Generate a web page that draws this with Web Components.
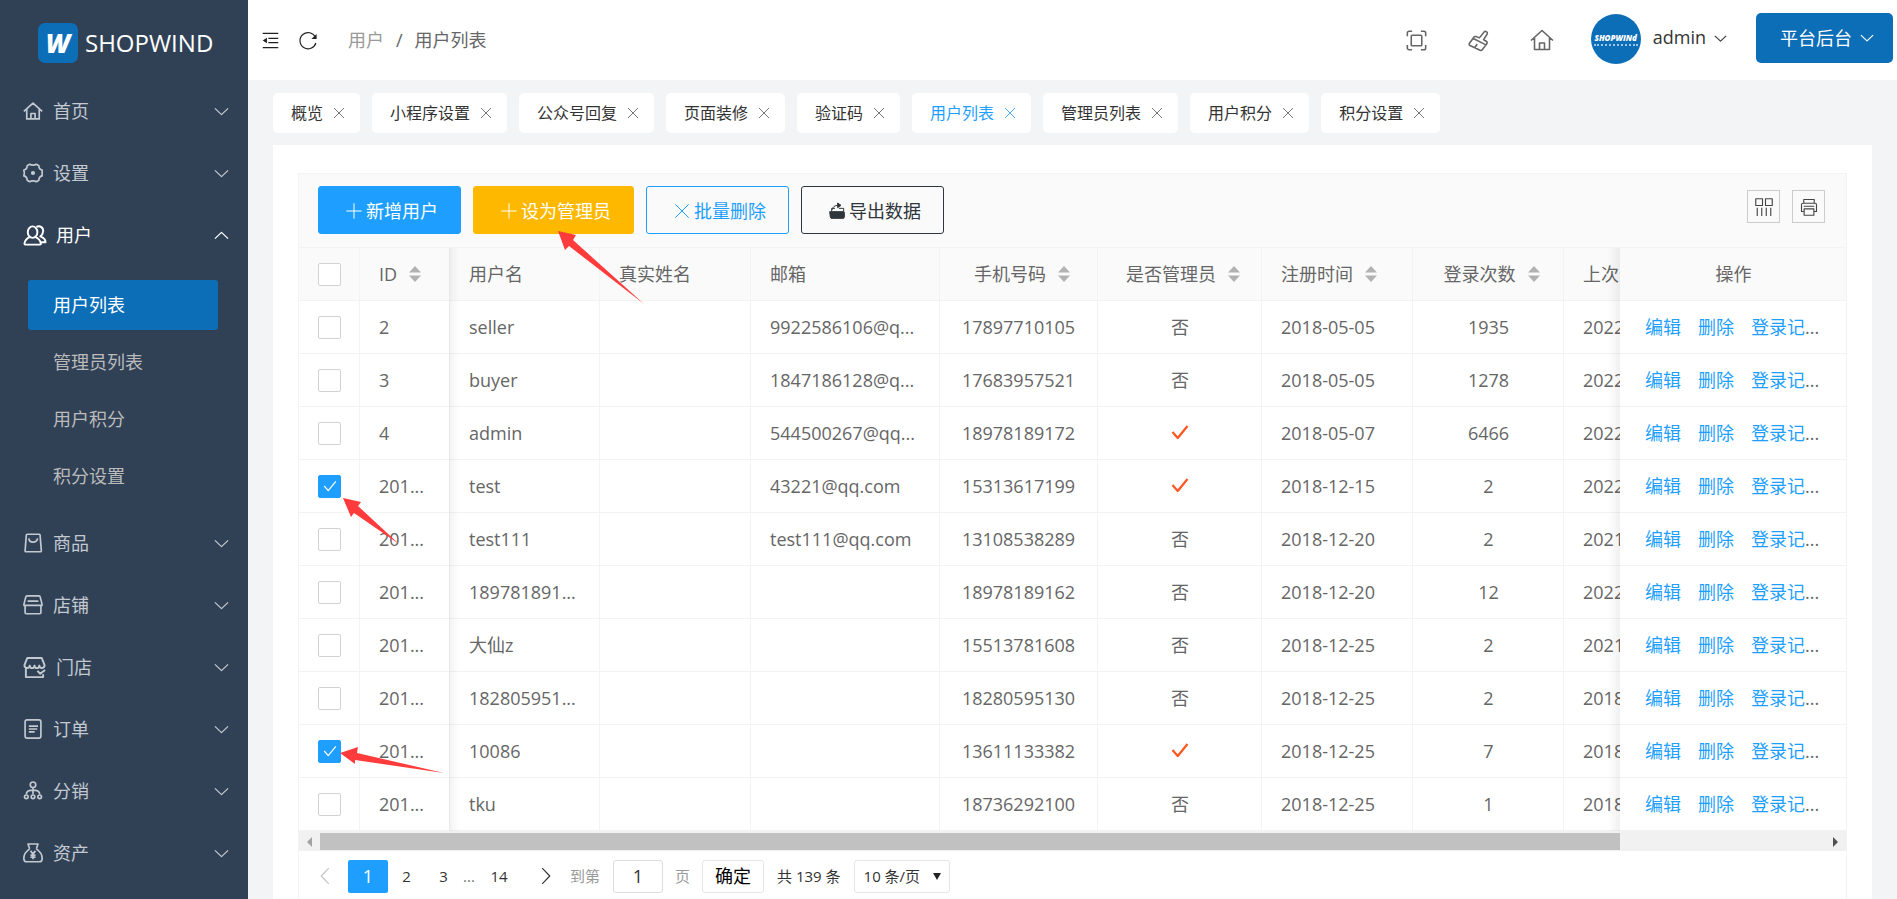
<!DOCTYPE html>
<html lang="zh-CN">
<head>
<meta charset="utf-8">
<title>用户列表</title>
<style>
  html, body { margin: 0; height: 100%; }
  body {
    overflow: hidden;
    background: #f3f4f6;
    color: #333;
    font: 18px/24px "Open Sans", "Noto Sans CJK SC", sans-serif;
  }
</style>
</head>
<body>
<shop-app></shop-app>

<script>
const ICONS = {
  home: '<path d="M1 12.500 12 2.500l11 10M4.500 10v11.500h15V10M9.500 21.500V15h5v6.500"/>',
  gear: '<path d="M8 1.500c2 1.500 6 1.500 8 0l3 1.800c0 3 1.500 4.700 4 5.200v3.500c-.3 1 0 2.500 0 3.500-2.500.5-4 2.200-4 5.200l-3 1.800c-2-1.500-6-1.500-8 0l-3-1.800c0-3-1.500-4.700-4-5.200.8-2.300.8-4.700 0-7 2.500-.5 4-2.200 4-5.200z"/><circle cx="12" cy="12" r="1.500" fill="currentColor"/>',
  users: '<ellipse cx="10" cy="8.500" rx="5" ry="6"/><path d="M7.500 13.500C4 15 2 17 1.500 20.500c0 1 .5 1 1.500 1h14.500c1 0 1.500-.5 1-1.500-.5-3-2.500-5-6-6.500M14 3c4-2 7.500 1 7 5-.3 2.500-1.500 4-3 5 4 1.500 5.500 3.500 5.500 6h-5"/>',
  bag: '<path d="M5 1.500h14.500c.6 0 1 .4 1 1L22 21.500c0 .6-.4 1-1 1H3.500c-.6 0-1-.4-1-1L4 2.500c0-.6.4-1 1-1zM7 6.500c.5 6 9.500 6 10.500 0"/>',
  shop: '<path d="M5 1h14c1 0 1.500.5 1.700 1.500L22.800 11v1.500H1.200V11L3.300 2.500C3.500 1.500 4 1 5 1zM2.500 13v8c0 1 .5 1.500 1.500 1.500h16c1 0 1.500-.5 1.500-1.500v-8M5.500 7.300h13"/>',
  store: '<path d="M4.500 2h15l3 7.500c0 4-5 4-5.500.5-.5 3.500-4.500 3.500-5 0-.5 3.500-4.500 3.500-5 0-.5 3.500-5.500 3.500-5.500-.5zM3 13v9h18v-3M15 15.500l3 3 5-4"/>',
  order: '<rect x="2.500" y="1" width="19" height="22" rx="2.500"/><path d="M7 8.500h11M7 12h10M7 15.500h7"/>',
  tree: '<circle cx="12" cy="4.500" r="3.300"/><path d="M12 8v8M4 16c0-3 3-5 8-5s8 2 8 5"/><circle cx="4" cy="19" r="2.200"/><circle cx="12" cy="19" r="2.200"/><circle cx="20" cy="19" r="2.200"/>',
  money: '<path d="M8 7 6 1.200h12L16 7M8 7C3.500 10 1 14 1 18.500c0 2.500 1 4 3.500 4h15c2.500 0 3.500-1.500 3.500-4C23 14 20.500 10 16 7M9 9.500l3 3.500 3-3.500M12 13v6.500M9 14.500h6M9 17h6"/>',
  down: '<path d="M1.500 7 12 17 22.500 7"/>',
  up: '<path d="M1.500 17 12 7l10.500 10"/>',
  left: '<path d="M17 1.500 7 12l10 10.500"/>',
  right: '<path d="M7 1.500 17 12 7 22.500"/>',
  fold: '<path d="M1 2h22M9 9h14M9 15h14M1 22h22"/><path d="M1 12l6-4v8z" fill="currentColor" stroke="none"/>',
  refresh: '<path d="M22 8.500A10.800 10.800 0 1 0 22.500 16"/><path d="M23.500 4v6.500h-7z" fill="currentColor" stroke="none"/>',
  full: '<rect x="6" y="6" width="12" height="12" rx="1"/><path d="M1.500 7V3.500c0-1 1-2 2-2H7M17 1.500h3.500c1 0 2 1 2 2V7M22.500 17v3.500c0 1-1 2-2 2H17M7 22.500H3.500c-1 0-2-1-2-2V17"/>',
  brush: '<path d="M5.500 9.500 20.500 17M6.500 8.500 1.500 15.500c-.5 1 0 2 .8 2.300l11.500 5.400c1 .5 2 .2 2.500-.7l5-6.500c.8-1.200.5-2.500-.5-3.200l-3-1.700L22 4.500c1-2.500-2.500-4-3.800-2L13 9 9 7.500c-1-.3-2 0-2.500 1zM8 20l2.500-4"/>',
  plus: '<path d="M12 .5v23M.5 12h23"/>',
  close: '<path d="M2 2l20 20M22 2 2 22"/>',
  tick: '<path d="M2 12l7 8L22 4"/>',
  exportout: '<path d="M1 13h20l2 1v7l-1 2H3l-1-2z" fill="currentColor"/><path d="M4 12V8h5M15 8h7v11M5 10c1-5 4-6.500 9-6.500"/><path d="M13 0l5 3.500-5 3.500z" fill="currentColor"/>',
  columns: '<path d="M1 1h9v9H1zM14 1h9v9h-9zM3 13v11M9 13v11M15 13v11M21 13v11"/>',
  printer: '<path d="M5 7V2h14v5M5 18H2V9c0-1.200.8-2 2-2h16c1.200 0 2 .8 2 2v9h-3M5.500 14.500h13V23h-13zM5 11h14"/>'
};

/* Registers an element whose shadow root is cloned from the given markup. */
function define(name, html, setup) {
  customElements.define(name, class extends HTMLElement {
    connectedCallback() {
      if (this.shadowRoot) return;
      const root = this.attachShadow({ mode: 'open' });
      const tpl = document.createElement('template');
      tpl.innerHTML = typeof html === 'function' ? html(this) : html;
      root.append(tpl.content.cloneNode(true));
      if (setup) setup(root, this);
    }
  });
}

define('ui-icon', el => `
  <style>
    :host { display: inline-block; flex: none; width: var(--size, 20px); height: var(--size, 20px); }
    svg { display: block; width: 100%; height: 100%; overflow: visible; fill: none;
      stroke: currentColor; stroke-width: var(--stroke, 2); stroke-linejoin: round; }
  </style>
  <svg viewBox="0 0 24 24" aria-hidden="true">${ICONS[el.getAttribute('name')]}</svg>`);

define('side-item', el => `
  <style>
    :host { display: block; color: #c3c9d1; }
    :host([open]) { color: #fff; }
    a { display: flex; align-items: center; gap: 10px; height: 62px; padding: 0 19px 0 23px; color: inherit; text-decoration: none; }
    .label { flex: 1; }
    .arrow { --size: 15px; }
    :host([wide]) .main { --size: 23px; }
  </style>
  <a href="#"><ui-icon class="main" name="${el.getAttribute('icon')}"></ui-icon>
    <span class="label"><slot></slot></span>
    <ui-icon class="arrow" name="${el.hasAttribute('open') ? 'up' : 'down'}"></ui-icon></a>
  <slot name="sub"></slot>`);

define('side-sub', `
  <style>
    :host { display: block; }
    nav { display: flex; flex-direction: column; gap: 7px; padding: 14px 30px 11px 28px; }
    a { height: 50px; line-height: 50px; padding-left: 25px; border-radius: 3px; color: #bbb; text-decoration: none; }
    a.on { background: #0d6eb8; color: #fff; }
  </style>
  <nav><a class="on" href="#">用户列表</a><a href="#">管理员列表</a><a href="#">用户积分</a><a href="#">积分设置</a></nav>`);

define('shop-sidebar', `
  <style>
    :host { display: block; background: #304156; overflow: hidden; }
    .logo { display: flex; align-items: center; gap: 7px; height: 80px; padding: 6px 0 0 38px; box-sizing: border-box;
      color: #fff; font-size: 24px; line-height: 40px; text-decoration: none; }
    .mark { width: 40px; height: 40px; border-radius: 7px; background: #0d6eb8; text-align: center;
      font-size: 26px; font-weight: 800; font-style: italic; }
  </style>
  <a class="logo" href="#"><span class="mark">W</span><span>SHOPWIND</span></a>
  <side-item icon="home">首页</side-item>
  <side-item icon="gear">设置</side-item>
  <side-item icon="users" open wide>用户<side-sub slot="sub"></side-sub></side-item>
  <side-item icon="bag">商品</side-item>
  <side-item icon="shop">店铺</side-item>
  <side-item icon="store" wide>门店</side-item>
  <side-item icon="order">订单</side-item>
  <side-item icon="tree">分销</side-item>
  <side-item icon="money">资产</side-item>`);

define('shop-header', `
  <style>
    :host { display: flex; align-items: center; height: 80px; box-sizing: border-box; padding: 0 4px 0 14px; background: #fff; }
    a { color: inherit; text-decoration: none; display: flex; align-items: center; }
    .fold { --size: 17px; color: #222; --stroke: 1.6; }
    .refresh { --size: 18px; color: #222; margin-left: 20px; --stroke: 1.6; }
    .crumbs { display: flex; gap: 12px; margin-left: 31px; color: #666; }
    .crumbs a { color: #999; }
    .tools { display: flex; align-items: center; margin-left: auto; color: #666; gap: 41px; --size: 21px; --stroke: 1.8; }
    .tools .h { --size: 24px; --stroke: 1.6; }
    .user { margin-left: 37px; gap: 12px; }
    .avatar { display: flex; flex-direction: column; justify-content: center; align-items: center; width: 50px; height: 50px;
      border-radius: 50%; background: #0d6eb8; color: #fff; overflow: hidden; font-size: 8px; font-weight: 800;
      font-style: italic; line-height: 10px; margin-top: -2px; }
    .avatar::after { content: ""; width: 44px; border-top: 2px dotted #9cc5e3; margin-top: 1px; }
    .name { display: flex; align-items: center; gap: 8px; margin-top: -6px; --size: 13px; }
    .name ui-icon { margin-top: 2px; }
    .platform { display: flex; align-items: center; gap: 8px; height: 50px; margin: -4px 0 0 29px; padding: 0 19px 0 24px;
      border: 0; border-radius: 5px; background: #0d6eb8; color: #fff; font: inherit; --size: 14px; }
  </style>
  <a href="#" aria-label="收起"><ui-icon class="fold" name="fold"></ui-icon></a>
  <a href="#" aria-label="刷新"><ui-icon class="refresh" name="refresh"></ui-icon></a>
  <nav class="crumbs"><a href="#">用户</a><span>/</span><span>用户列表</span></nav>
  <div class="tools">
    <a href="#" aria-label="全屏"><ui-icon name="full"></ui-icon></a>
    <a href="#" aria-label="清理"><ui-icon name="brush"></ui-icon></a>
    <a href="#" aria-label="首页"><ui-icon class="h" name="home"></ui-icon></a>
  </div>
  <a class="user" href="#"><span class="avatar">SHOPWINd</span>
    <span class="name">admin <ui-icon name="down"></ui-icon></span></a>
  <button class="platform">平台后台<ui-icon name="down"></ui-icon></button>`);

define('tab-item', `
  <style>
    :host { display: flex; align-items: center; gap: 10px; height: 40px; padding: 0 15px 0 18px; border-radius: 5px;
      background: #fff; color: #333; font-size: 16px; box-sizing: border-box; }
    :host([active]) { color: #1e9fff; }
    a { color: inherit; text-decoration: none; white-space: nowrap; }
    button { display: flex; padding: 0; border: 0; background: none; color: #777; --size: 12px; }
    :host([active]) button { color: #4ea8f5; }
  </style>
  <a href="#"><slot></slot></a><button aria-label="关闭"><ui-icon name="close"></ui-icon></button>`);

define('action-button', el => `
  <style>
    :host { display: block; }
    button { display: flex; align-items: center; gap: 4px; height: 48px; box-sizing: border-box; padding: 2px 22px 0 27px;
      border: 1px solid var(--line); border-radius: 3px; background: var(--fill, transparent); color: var(--ink, #fff);
      font: inherit; white-space: nowrap; --size: 16px; --stroke: 1.5; }
  </style>
  <button><ui-icon name="${el.getAttribute('icon')}"></ui-icon><slot></slot></button>`);

const USERS = [
  ['2', 'seller', '9922586106@q...', '17897710105', 0, '2018-05-05', '1935', '2022'],
  ['3', 'buyer', '1847186128@q...', '17683957521', 0, '2018-05-05', '1278', '2022'],
  ['4', 'admin', '544500267@qq...', '18978189172', 1, '2018-05-07', '6466', '2022'],
  ['201...', 'test', '43221@qq.com', '15313617199', 1, '2018-12-15', '2', '2022', 1],
  ['201...', 'test111', 'test111@qq.com', '13108538289', 0, '2018-12-20', '2', '2021'],
  ['201...', '189781891...', '', '18978189162', 0, '2018-12-20', '12', '2022'],
  ['201...', '大仙z', '', '15513781608', 0, '2018-12-25', '2', '2021'],
  ['201...', '182805951...', '', '18280595130', 0, '2018-12-25', '2', '2018'],
  ['201...', '10086', '', '13611133382', 1, '2018-12-25', '7', '2018', 1],
  ['201...', 'tku', '', '18736292100', 0, '2018-12-25', '1', '2018']
];
const SORT = '<svg class="sort" viewBox="0 0 12 16" aria-hidden="true"><path d="M6 0l6 6.500H0zM6 16l6-6.500H0z"/></svg>';
const box = (on, label) => `<span class="box"><input type="checkbox" aria-label="${label}"${on ? ' checked' : ''}><ui-icon name="tick"></ui-icon></span>`;

define('user-table', `
  <style>
    :host { display: block; }
    .scroll { overflow: hidden; }
    table { width: 1803px; min-width: 100%; table-layout: fixed; border-collapse: separate; border-spacing: 0; color: #666; }
    th, td { height: 53px; box-sizing: border-box; padding: 0 18px 0 19px; border: 0 solid #f3f3f3; border-width: 0 1px 1px 0;
      background: #fff; font-weight: 400; text-align: left; white-space: nowrap; overflow: hidden; }
    th { background: #fafafa; }
    .c { text-align: center; }
    .tel { padding: 0 8px; }
    .fix { position: sticky; z-index: 1; }
    .f0 { left: 0; }
    .f1 { left: 61px; overflow: visible; }
    .f1::after { content: ""; position: absolute; left: 100%; top: 0; bottom: -1px; width: 10px;
      background: linear-gradient(90deg, rgba(0,0,0,.05), transparent); }
    .end { right: 0; border-right: 0; overflow: visible; }
    .end::before { content: ""; position: absolute; right: 100%; top: 0; bottom: -1px; width: 12px;
      background: linear-gradient(270deg, rgba(0,0,0,.06), transparent); }
    .ops { display: flex; gap: 17px; padding-left: 6px; }
    a { color: #1e9fff; text-decoration: none; }
    .sort { width: 12px; height: 16px; margin: 0 -6px -1px 12px; fill: #b2b2b2; }
    .f1 .sort { margin-right: 0; }
    .box { display: grid; width: 23px; height: 23px; }
    .box > * { grid-area: 1 / 1; }
    input { appearance: none; margin: 0; box-sizing: border-box; border: 1px solid #d2d2d2; border-radius: 2px; background: #fff; }
    input:checked { background: #1e9fff; border-color: #1e9fff; }
    .box ui-icon { visibility: hidden; place-self: center; color: #fff; --size: 14px; --stroke: 2; }
    input:checked + ui-icon { visibility: visible; }
    .yes { display: block; margin: 0 auto 2px; color: #ff5722; --size: 18px; --stroke: 3; }
    .bar { display: flex; align-items: center; justify-content: space-between; height: 20px; padding: 2px 8px 1px;
      box-sizing: border-box; background: #f1f1f1; }
    .track { flex: 1; height: 17px; margin: 0 8px; }
    .thumb { width: calc(100% - 205px); height: 17px; background: #c1c1c1; }
    .tri { border: 5px solid transparent; border-width: 5px 0; }
    .tri.l { border-right: 5px solid #a3a3a3; }
    .tri.r { border-left: 5px solid #505050; }
  </style>
  <div class="scroll"><table>
    <colgroup><col style="width:61px"><col style="width:90px"><col style="width:150px"><col style="width:151px">
      <col style="width:189px"><col style="width:158px"><col style="width:164px"><col style="width:151px">
      <col style="width:151px"><col><col style="width:226px"></colgroup>
    <thead><tr>
      <th class="fix f0">${box(0, '全选')}</th><th class="fix f1">ID${SORT}</th><th>用户名</th><th>真实姓名</th><th>邮箱</th>
      <th class="c">手机号码${SORT}</th><th class="c">是否管理员${SORT}</th><th>注册时间${SORT}</th><th class="c">登录次数${SORT}</th>
      <th>上次登录</th><th class="fix end c">操作</th>
    </tr></thead>
    <tbody>${USERS.map(u => `<tr>
      <td class="fix f0">${box(u[8], '选择 ' + u[1])}</td><td class="fix f1">${u[0]}</td><td>${u[1]}</td><td></td><td>${u[2]}</td>
      <td class="c tel">${u[3]}</td><td class="c">${u[4] ? '<ui-icon class="yes" name="tick"></ui-icon>' : '否'}</td>
      <td>${u[5]}</td><td class="c">${u[6]}</td><td>${u[7]}</td>
      <td class="fix end"><div class="ops"><a href="#">编辑</a><a href="#">删除</a><span><a href="#">登录记</a>...</span></div></td>
    </tr>`).join('')}</tbody>
  </table></div>
  <div class="bar"><i class="tri l"></i><div class="track"><div class="thumb"></div></div><i class="tri r"></i></div>`);

define('page-bar', `
  <style>
    :host { display: flex; align-items: center; height: 50px; padding-left: 17px; font-size: 15px; color: #333; }
    a { display: flex; justify-content: center; align-items: center; height: 33px; color: inherit; text-decoration: none; --size: 18px; --stroke: 1.5; }
    .prev { color: #c2c2c2; width: 18px; margin-right: 14px; }
    .on { width: 40px; border-radius: 2px; background: #1e9fff; color: #fff; font-size: 18px; }
    .n { width: 37px; }
    .dots { width: 14px; text-align: center; color: #777; }
    .last { width: 46px; }
    .next { width: 18px; margin: 0 15px; }
    label, .page { color: #999; }
    input { width: 50px; height: 33px; box-sizing: border-box; margin: 0 12px 0 13px; padding: 0; border: 1px solid #ddd; border-radius: 3px;
      color: #333; font: inherit; font-size: 18px; text-align: center; }
    button { width: 62px; height: 33px; margin: 0 13px 0 12px; padding: 0; border: 1px solid #e6e6e6; border-radius: 3px; background: #fff;
      color: #000; font: inherit; font-size: 18px; }
    .limit { display: grid; align-items: center; margin-left: 13px; }
    .limit > * { grid-area: 1 / 1; }
    select { appearance: none; width: 96px; height: 33px; padding: 0 0 0 9px; border: 1px solid #e6e6e6; border-radius: 3px;
      background: #fff; color: #333; font: inherit; }
    .limit i { justify-self: end; margin-right: 9px; border: 4px solid transparent; border-top: 7px solid #222; border-bottom: 0; pointer-events: none; }
  </style>
  <a class="prev" href="#" aria-label="上一页"><ui-icon name="left"></ui-icon></a>
  <a class="on" href="#">1</a><a class="n" href="#">2</a><a class="n" href="#">3</a><span class="dots">...</span>
  <a class="last" href="#">14</a><a class="next" href="#" aria-label="下一页"><ui-icon name="right"></ui-icon></a>
  <label for="p">到第</label><input id="p" type="text" value="1"><span class="page">页</span>
  <button>确定</button><span>共 139 条</span>
  <span class="limit"><select aria-label="每页条数"><option>10 条/页</option></select><i></i></span>`);

define('user-panel', `
  <style>
    :host { display: block; background: #fff; padding: 28px 25px 0; }
    .frame { position: relative; border: 1px solid #f3f3f3; border-bottom: 0; height: 100%; box-sizing: border-box; }
    .bar { display: flex; align-items: flex-start; gap: 12px; height: 74px; box-sizing: border-box; padding: 12px 21px 0 19px;
      background: #fafafa; border-bottom: 1px solid #f3f3f3; }
    .blue { --fill: #1e9fff; --line: #1e9fff; }
    .gold { --fill: #ffb800; --line: #ffb800; }
    .line { --line: #1e9fff; --ink: #1e9fff; }
    .dark { --line: #2f363c; --ink: #2f363c; }
    .sq { display: grid; place-items: center; width: 33px; height: 33px; margin-top: 4px; padding: 0; border: 1px solid #ccc;
      background: none; color: #444; --size: 18px; --stroke: 1.5; }
    .push { margin-left: auto; }
    .marks { position: absolute; left: 0; top: 0; width: 360px; height: 620px; fill: #ff3b3b; z-index: 2; pointer-events: none; }
  </style>
  <div class="frame">
    <div class="bar">
      <action-button class="blue" icon="plus">新增用户</action-button>
      <action-button class="gold" icon="plus">设为管理员</action-button>
      <action-button class="line" icon="close">批量删除</action-button>
      <action-button class="dark" icon="exportout">导出数据</action-button>
      <button class="sq push" aria-label="筛选列"><ui-icon name="columns"></ui-icon></button>
      <button class="sq" aria-label="打印"><ui-icon name="printer"></ui-icon></button>
    </div>
    <user-table></user-table>
    <page-bar></page-bar>
    <svg class="marks" viewBox="0 0 360 620" aria-hidden="true">
      <path d="M259 57l18 4-3 5 71 64-75-58-4 4z"/>
      <path d="M44 324l18 4-3 4 41 38-45-31-3 4z"/>
      <path d="M41 579l18-6-1 6 87 20-89-13 0 4z"/>
    </svg>
  </div>`);

define('shop-app', `
  <style>
    :host { display: grid; grid-template-columns: 248px minmax(0, 1fr); height: 100vh; overflow: hidden; }
    main { display: flex; flex-direction: column; min-height: 0; overflow: hidden; }
    shop-header { flex: none; }
    .tabs { display: flex; gap: 12px; padding: 13px 25px 12px; }
    user-panel { flex: 1; min-height: 0; margin: 0 25px; }
  </style>
  <shop-sidebar></shop-sidebar>
  <main>
    <shop-header></shop-header>
    <nav class="tabs">
      <tab-item>概览</tab-item><tab-item>小程序设置</tab-item><tab-item>公众号回复</tab-item><tab-item>页面装修</tab-item>
      <tab-item>验证码</tab-item><tab-item active>用户列表</tab-item><tab-item>管理员列表</tab-item><tab-item>用户积分</tab-item>
      <tab-item>积分设置</tab-item>
    </nav>
    <user-panel></user-panel>
  </main>`);
</script>
</body>
</html>
